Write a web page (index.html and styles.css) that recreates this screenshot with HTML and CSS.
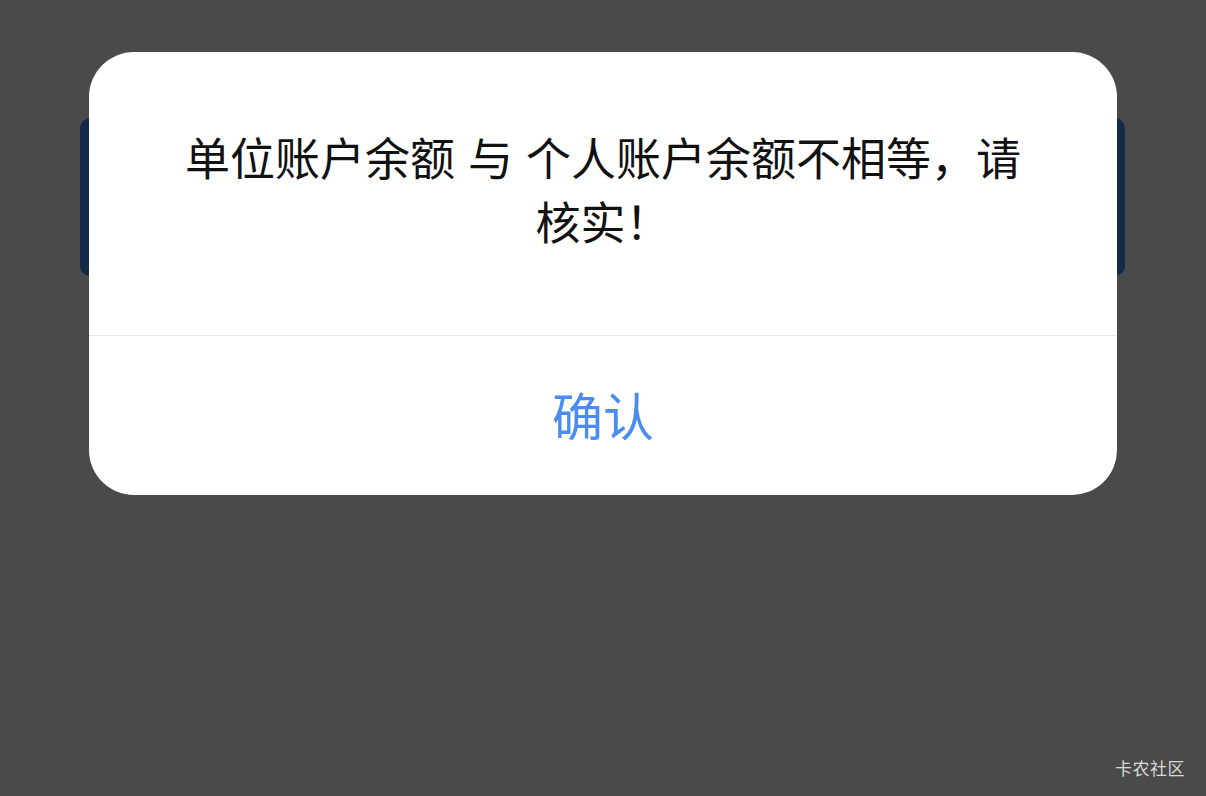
FILE: index.html
```html
<!DOCTYPE html>
<html lang="zh-CN">
<head>
<meta charset="utf-8">
<title>提示</title>
<link rel="stylesheet" href="styles.css">
</head>
<body>
<div class="page">
  <div class="card"></div>
  <div class="watermark">卡农社区</div>
  <div class="dialog">
    <div class="message">单位账户余额 与 个人账户余额不相等，请核实！</div>
    <div class="actions">
      <button class="confirm">确认</button>
    </div>
  </div>
</div>
</body>
</html>
```

FILE: styles.css
```css
html, body {
  margin: 0;
  padding: 0;
}
body {
  background: #4a4a4a;
  font-family: "Noto Sans CJK SC", "Noto Sans", sans-serif;
}
.page {
  position: relative;
  width: 1206px;
  height: 796px;
  overflow: hidden;
  display: flex;
  flex-direction: column;
}
.card {
  margin: 118px 0 0 80px;
  width: 1045px;
  height: 158px;
  border-radius: 10px;
  background: #152a48;
}
.watermark {
  margin: auto 21px 18px auto;
  font-size: 17px;
  line-height: 20px;
  color: #d8d8d8;
  letter-spacing: 0.5px;
}
.dialog {
  position: absolute;
  left: 89px;
  top: 52px;
  width: 1028px;
  height: 443px;
  background: #ffffff;
  border-radius: 45px;
  display: flex;
  flex-direction: column;
  overflow: hidden;
}
.message {
  padding: 73px 80px 82px;
  font-size: 45px;
  line-height: 64px;
  color: #111111;
  text-align: center;
  border-bottom: 1px solid #e8e8e8;
  word-spacing: 3px;
}
.actions {
  flex: 1;
  display: flex;
}
.confirm {
  flex: 1;
  border: none;
  background: transparent;
  font-family: "Noto Sans CJK SC", "Noto Sans", sans-serif;
  font-size: 51px;
  color: #4a8cf0;
  padding: 0 0 4px;
  cursor: pointer;
}
```
